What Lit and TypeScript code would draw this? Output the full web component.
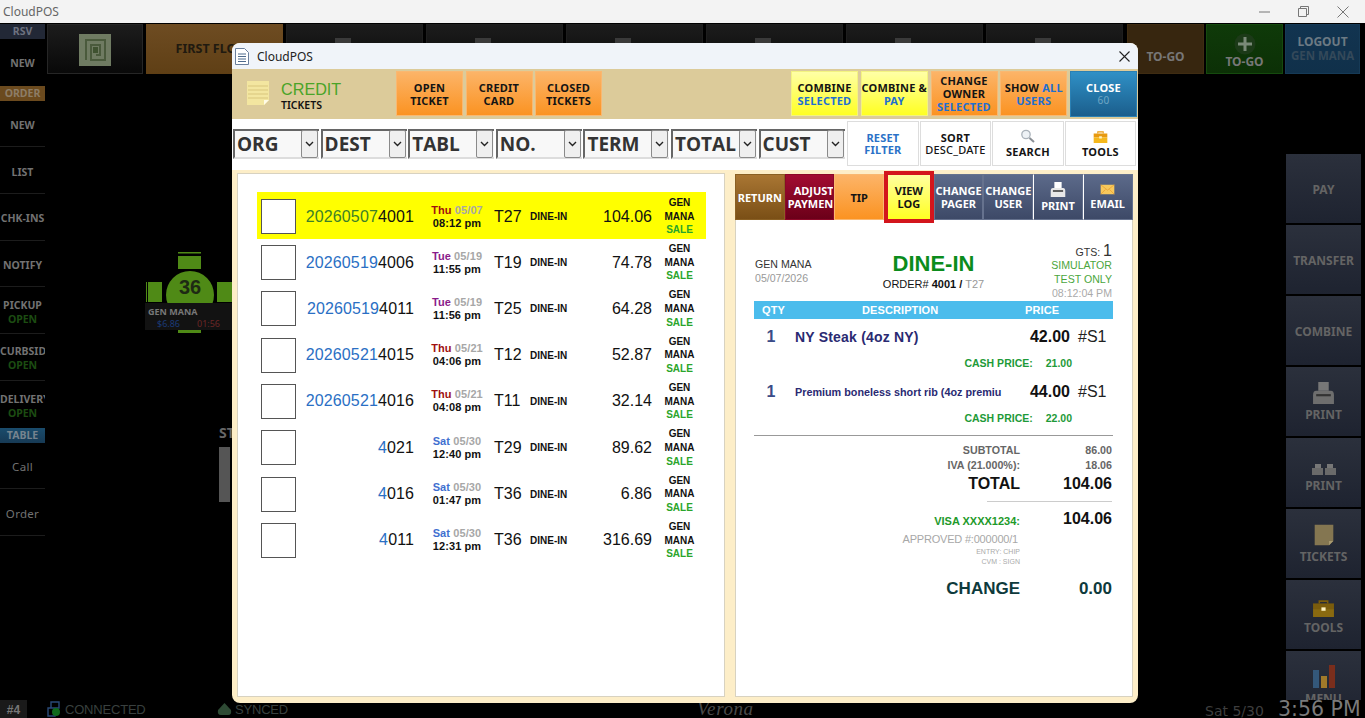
import { LitElement, html, css, svg } from 'lit';
import { customElement } from 'lit/decorators.js';
import { classMap } from 'lit/directives/class-map.js';

const printerIcon = (w: number, h: number, a = '#e8e8e8', b = '#fff') => html`<svg class="ico" width=${w} height=${h} viewBox="0 0 22 20" preserveAspectRatio="none">
  <path d="M6 0h10v8H6z" fill=${b} />
  <path d="M1 12q0-4 3-4h14q3 0 3 4v8H1z" fill=${a} />
  <path d="M4 11h14v2H4z" fill="#333" />
</svg>`;

const envelopeIcon = () => html`<svg class="ico" width="15" height="11" viewBox="0 0 22 16" preserveAspectRatio="none">
  <path d="M1 1h20v14H1z" fill="#f8c95c" />
  <path d="M1 1l10 8 10-8M1 15l7-7M21 15l-7-7" fill="none" stroke="#e89a2c" />
</svg>`;

const toolboxIcon = (w: number, h: number, body = '#f5b81c', top = '#e89a10') => html`<svg class="ico" width=${w} height=${h} viewBox="0 0 22 15" preserveAspectRatio="none">
  <path d="M7 3V1h8v2" fill="none" stroke=${top} stroke-width="1.5" />
  <path d="M1 3h20v5H1z" fill=${top} />
  <path d="M1 8h20v7H1z" fill=${body} />
  <path d="M9 6.5h4v3H9z" fill="#fff3c0" />
</svg>`;

const noteIcon = (w: number, h: number, c = '#f3e6a0', lines = true) => html`<svg class="ico" width=${w} height=${h} viewBox="0 0 26 26">
  <path d="M2 1h22v19l-5 5H2z" fill=${c} />
  ${lines ? [6, 10, 14, 18].map((y) => svg`<path d="M3 ${y}h20" stroke="#d9c67c" stroke-width="1" />`) : ''}
  <path d="M24 20h-5v5z" fill=${lines ? '#fffbe6' : '#a89a70'} />
</svg>`;

interface Ticket {
  pre: string;
  no: string;
  day: string;
  dayClass: string;
  date: string;
  time: string;
  table: string;
  total: string;
}

const tickets: Ticket[] = [
  { pre: '20260507', no: '4001', day: 'Thu', dayClass: 'thu', date: '05/07', time: '08:12 pm', table: 'T27', total: '104.06' },
  { pre: '20260519', no: '4006', day: 'Tue', dayClass: 'tue', date: '05/19', time: '11:55 pm', table: 'T19', total: '74.78' },
  { pre: '20260519', no: '4011', day: 'Tue', dayClass: 'tue', date: '05/19', time: '11:56 pm', table: 'T25', total: '64.28' },
  { pre: '20260521', no: '4015', day: 'Thu', dayClass: 'thu', date: '05/21', time: '04:06 pm', table: 'T12', total: '52.87' },
  { pre: '20260521', no: '4016', day: 'Thu', dayClass: 'thu', date: '05/21', time: '04:08 pm', table: 'T11', total: '32.14' },
  { pre: '4', no: '021', day: 'Sat', dayClass: 'sat', date: '05/30', time: '12:40 pm', table: 'T29', total: '89.62' },
  { pre: '4', no: '016', day: 'Sat', dayClass: 'sat', date: '05/30', time: '01:47 pm', table: 'T36', total: '6.86' },
  { pre: '4', no: '011', day: 'Sat', dayClass: 'sat', date: '05/30', time: '12:31 pm', table: 'T36', total: '316.69' },
];

const filters = ['ORG', 'DEST', 'TABL', 'NO.', 'TERM', 'TOTAL', 'CUST'];

@customElement('app-root')
export class AppRoot extends LitElement {
  static styles = css`
    :host {
      display: block;
      position: relative;
      width: 1365px;
      height: 718px;
      overflow: hidden;
      background: #000;
      font-family: 'Noto Sans', 'Liberation Sans', sans-serif;
    }
    .ico {
      display: block;
    }

    /* window chrome */
    .titlebar {
      height: 23px;
      background: #f3f3f3;
      display: flex;
      align-items: center;
      justify-content: space-between;
      padding-left: 3px;
      font-size: 12px;
      color: #666;
    }
    .winctl {
      display: flex;
      align-items: center;
      gap: 28px;
      padding-right: 16px;
    }

    /* background app */
    .main {
      height: 677px;
      display: flex;
      overflow: hidden;
    }
    .side {
      width: 45px;
      flex: none;
      padding-top: 1px;
      font-weight: 700;
      font-size: 10.5px;
      color: #727272;
    }
    .tag {
      height: 15px;
      line-height: 15px;
      text-align: center;
    }
    .tag.rsv {
      background: #222836;
      color: #6d7280;
    }
    .tag.order {
      background: #6b4a1e;
      color: #8d7d66;
    }
    .tag.table {
      background: linear-gradient(#1a4c6c, #173a55);
      color: #76848f;
    }
    .side-item {
      height: 46.7px;
      box-sizing: border-box;
      padding-top: 3px;
      display: flex;
      flex-direction: column;
      justify-content: center;
      text-align: center;
      white-space: nowrap;
      line-height: 14px;
      overflow: hidden;
      border-bottom: 1px solid #1c1c1c;
    }
    .side-item.plain {
      border-bottom: 0;
      padding-top: 1px;
    }
    .side-item.plain.last {
      padding-top: 3px;
    }
    .side-item span {
      display: block;
    }
    .side-item.long span {
      text-align: left;
    }
    .side-item .open,
    .side-item.long .open {
      color: #1c4c12;
      text-align: center;
    }
    .side-item.thin {
      font-weight: 400;
      font-size: 11.5px;
      letter-spacing: 0.3px;
    }
    .center {
      flex: 1;
      display: flex;
      flex-direction: column;
      min-width: 0;
    }
    .top {
      height: 50px;
      display: flex;
      padding: 1px 0 0 2px;
      box-sizing: border-box;
      flex: none;
    }
    .cell {
      box-sizing: border-box;
      width: 137px;
      height: 50px;
      margin-right: 3px;
      background: linear-gradient(#1c1c1c, #090909);
      border: 1px solid #1e1e1e;
      display: flex;
      justify-content: center;
      padding-top: 13px;
      font-size: 12px;
      font-weight: 700;
      color: #777;
    }
    .cell.logo {
      width: 96px;
      margin-right: 3px;
      padding-top: 9px;
      border-color: #262626;
    }
    .cell.floor {
      background: linear-gradient(#6e4c22, #5f3f15);
      border: 0;
      color: #201a10;
      padding-top: 16px;
      padding-left: 1px;
      font-size: 12.5px;
    }
    .cell .bump {
      margin-left: -24px;
    }
    .cell.small {
      width: 77px;
      margin-right: 2px;
      padding-top: 0;
      flex-direction: column;
      align-items: center;
      justify-content: flex-end;
      padding-bottom: 5px;
      line-height: 13px;
    }
    .cell.togo {
      background: #37260f;
      border-color: #3f2c12;
      padding-bottom: 10px;
      margin-left: 1px;
    }
    .cell.add {
      background: linear-gradient(#0f3a09, #0c3006);
      border-color: #154a0e;
    }
    .cell.logout {
      background: linear-gradient(#123450, #10304a);
      border-color: #163a56;
      justify-content: center;
      padding-bottom: 0;
      width: 75px;
      line-height: 14px;
      color: #6c7a84;
    }
    .cell.logout small {
      color: #34495a;
      font-size: 11.5px;
    }
    .lower {
      flex: 1;
      display: flex;
      min-height: 0;
    }
    .floor-area {
      flex: 1;
      position: relative;
    }
    .tbl {
      position: absolute;
      left: 100px;
      top: 179px;
      width: 87px;
      height: 82px;
      overflow: hidden;
    }
    .tbl .label {
      position: absolute;
      left: 0;
      top: 51px;
      width: 87px;
      height: 27px;
      background: #121212;
      box-sizing: border-box;
      padding: 3px 0 0 3px;
      font-size: 9px;
      font-weight: 700;
      line-height: 12px;
      color: #777;
    }
    .tbl .label div {
      display: flex;
      gap: 17px;
      padding-left: 9px;
      font-weight: 400;
    }
    .tbl .amt {
      color: #1b3a78;
    }
    .tbl .tm {
      color: #6a2626;
    }
    .tbl .no {
      position: absolute;
      left: 0;
      right: 0;
      top: 24px;
      text-align: center;
      text-indent: 3px;
      font: 700 20px 'Liberation Sans', sans-serif;
      color: #1e2a14;
    }
    .station {
      position: absolute;
      left: 174px;
      top: 352px;
      font-size: 14px;
      font-weight: 700;
      color: #666;
      line-height: 16px;
    }
    .block {
      width: 11px;
      height: 55px;
      margin-top: 6px;
      background: #555;
    }
    .right {
      width: 75px;
      flex: none;
      margin-right: 4px;
      padding-top: 81px;
      display: flex;
      flex-direction: column;
      gap: 2px;
    }
    .rbtn {
      flex: none;
      height: 69px;
      box-sizing: border-box;
      padding-top: 2px;
      background: linear-gradient(#2b303c, #1e2330);
      display: flex;
      flex-direction: column;
      align-items: center;
      justify-content: center;
      gap: 2px;
      font-size: 12px;
      font-weight: 700;
      color: #646464;
    }
    .rbtn.iconed {
      justify-content: flex-end;
      padding-bottom: 13px;
    }

    .status {
      height: 18px;
      display: flex;
      align-items: center;
      font-family: 'Liberation Sans', sans-serif;
      font-size: 13px;
      color: #39403f;
      overflow: hidden;
    }
    .status .term {
      width: 27px;
      height: 18px;
      line-height: 20px;
      background: #1a1a1a;
      color: #777;
      font-weight: 700;
      font-size: 12px;
      text-align: center;
      flex: none;
    }
    .status .group {
      display: flex;
      align-items: center;
      gap: 3px;
      flex: none;
      letter-spacing: -0.2px;
    }
    .status .verona {
      width: 508px;
      flex: none;
      font: italic 19px 'Liberation Serif', serif;
      color: #4a4a4a;
      letter-spacing: 0.6px;
    }
    .status .date {
      width: 73px;
      flex: none;
      font: 14px 'DejaVu Sans', sans-serif;
      color: #3e3e3e;
      padding-top: 3px;
    }
    .status .clock {
      flex: none;
      font: 20.5px/18px 'DejaVu Sans', sans-serif;
      color: #7a7a7a;
      white-space: nowrap;
    }

    /* modal */
    .modal {
      position: absolute;
      left: 232px;
      top: 43px;
      width: 906px;
      height: 660px;
      border-radius: 8px;
      overflow: hidden;
      display: flex;
      flex-direction: column;
      background: #fdeec8;
    }
    .mtitle {
      height: 26px;
      flex: none;
      background: #f0f4f9;
      display: flex;
      align-items: center;
      padding: 0 8px 0 3px;
      gap: 8px;
      font-size: 12px;
      color: #222;
    }
    .mtitle .x {
      margin-left: auto;
    }
    .mhead {
      height: 50px;
      flex: none;
      box-sizing: border-box;
      background: #dccb9a;
      display: flex;
      align-items: flex-start;
      padding: 2px 1px 0 0;
    }
    .brand {
      width: 164px;
      flex: none;
      display: flex;
      gap: 10px;
      padding: 9px 0 0 13px;
      box-sizing: border-box;
    }
    .brand b {
      display: block;
      font: 400 16.2px/18px 'Liberation Sans', sans-serif;
      color: #4aa428;
    }
    .brand span {
      display: block;
      font-size: 10.5px;
      line-height: 14px;
      font-weight: 600;
      color: #111;
    }
    .bgroup {
      display: flex;
      gap: 2.5px;
    }
    .bgroup.end {
      margin-left: auto;
      gap: 2.75px;
    }
    .btn {
      box-sizing: border-box;
      width: 67px;
      height: 45px;
      border: 1px solid #f9b871;
      background: linear-gradient(#fcb468, #fb9322);
      color: #141414;
      font-size: 11px;
      font-weight: 700;
      line-height: 13px;
      letter-spacing: 0.2px;
      display: flex;
      flex-direction: column;
      align-items: center;
      justify-content: center;
      text-align: center;
      white-space: nowrap;
      overflow: hidden;
    }
    .btn.yellow {
      background: linear-gradient(#ffffa6, #ffff22);
      border-color: #f3f380;
    }
    .btn.blue {
      background: linear-gradient(#2f90c6, #1b5e8c);
      border-color: #2a80b4;
      color: #fff;
      height: 46px;
    }
    .btn.blue small {
      color: #6fa6c4;
      font-size: 10px;
      font-weight: 400;
    }
    .btn em {
      font-style: normal;
      color: #1f6fd0;
    }
    .mfilter {
      height: 51px;
      flex: none;
      background: #fff;
      display: flex;
      padding-left: 1px;
    }
    .sel {
      box-sizing: border-box;
      width: 86.1px;
      height: 30px;
      margin: 10px 1.5px 0 0;
      flex: none;
      background: #f8f8f8;
      border-top: 2px solid #666;
      border-left: 2px solid #666;
      border-bottom: 2px solid #ddd;
      display: flex;
      align-items: center;
      justify-content: space-between;
      padding-left: 2px;
      font: 700 19px 'Open Sans', sans-serif;
      color: #333;
    }
    .sel i {
      box-sizing: border-box;
      width: 17px;
      height: 28px;
      margin-top: -1px;
      margin-right: 1px;
      border: 1px solid #8a8a8a;
      border-radius: 2px;
      background: #efefef;
      display: flex;
      align-items: center;
      justify-content: center;
    }
    .tools {
      display: flex;
      margin: 2px 0 0 1px;
      gap: 1px;
    }
    .tool {
      box-sizing: border-box;
      width: 71.5px;
      height: 45px;
      background: #fff;
      border: 1px solid #ddd;
      font-size: 11px;
      font-weight: 700;
      line-height: 12px;
      letter-spacing: 0.2px;
      color: #141414;
      display: flex;
      flex-direction: column;
      align-items: center;
      justify-content: flex-end;
      padding-bottom: 7px;
      text-align: center;
      white-space: nowrap;
      gap: 3px;
    }
    .tool.text {
      justify-content: center;
      padding-bottom: 0;
      gap: 0;
    }
    .tool.reset {
      color: #2a72c8;
    }
    .tool .thin {
      font-weight: 500;
    }
    .content {
      flex: 1;
      display: flex;
      gap: 10px;
      padding: 3px 5px 6px;
      min-height: 0;
    }
    .list {
      width: 488px;
      flex: none;
      box-sizing: border-box;
      background: #fff;
      border: 1px solid #d8d2c0;
      padding: 18px 0 0 19px;
    }
    .row {
      width: 449px;
      height: 46.33px;
      display: grid;
      grid-template-columns: 35px 118px 80px 36px 60px 62px 54px;
      align-items: center;
      padding: 2px 0 0 4px;
      box-sizing: border-box;
      color: #111;
    }
    .row.hl {
      background: #ffff00;
      height: 47px;
      margin-bottom: -0.67px;
    }
    .check {
      width: 35px;
      height: 35px;
      box-sizing: border-box;
      background: #fff;
      border: 1px solid #555;
    }
    .num {
      font: 16px 'Liberation Sans', sans-serif;
      text-align: right;
      letter-spacing: 0.12px;
    }
    .num span {
      color: #2a6fc4;
    }
    .hl .num span {
      color: #3d7f28;
    }
    .when {
      font: 700 11px/13px 'Liberation Sans', sans-serif;
      text-align: center;
      padding-left: 6px;
      letter-spacing: 0.1px;
    }
    .when span {
      color: #a7a7a7;
    }
    .when .thu {
      color: #a01010;
    }
    .when .tue {
      color: #8a1a8a;
    }
    .when .sat {
      color: #3f6fd0;
    }
    .tb {
      font: 16px 'Liberation Sans', sans-serif;
    }
    .svc {
      font: 700 10px 'Liberation Sans', sans-serif;
    }
    .tot {
      font: 16px 'Liberation Sans', sans-serif;
      text-align: right;
    }
    .who {
      font: 700 10px/13.6px 'Liberation Sans', sans-serif;
      text-align: center;
      padding-left: 1px;
    }
    .who span {
      display: block;
      color: #2aa52a;
    }
    .detail {
      width: 398px;
      flex: none;
      display: flex;
      flex-direction: column;
    }
    .dbar {
      height: 46px;
      margin-top: 1px;
      flex: none;
      display: flex;
      position: relative;
      z-index: 1;
    }
    .dbar .btn {
      width: 49.7px;
      height: auto;
      letter-spacing: 0;
    }
    .btn.slate {
      background: linear-gradient(#5c6a8a, #3d4967);
      border-color: #66728e;
      color: #fff;
      justify-content: center;
    }
    .btn.slate.gap {
      border-left: 1px solid #fff;
      gap: 2px;
    }
    .btn.ret {
      background: linear-gradient(#a97633, #7a4f16);
      border-color: #8a6024;
      color: #fff;
    }
    .btn.adj {
      background: linear-gradient(#a20c32, #6b0019);
      border-color: #8c0828;
      color: #fff;
      align-items: flex-start;
      padding-left: 2px;
    }
    .btn.log {
      margin: -3px 0;
      border: 4px solid #d3151c;
      background: linear-gradient(#ffffa0, #ffff22);
    }
    .receipt {
      flex: 1;
      background: #fff;
      border: 1px solid #d8d2c0;
      border-top: 0;
      padding: 21px 19px 0 18px;
      font-family: 'Liberation Sans', sans-serif;
    }
    .rhead {
      height: 60px;
      display: grid;
      grid-template-columns: 110px 1fr 110px;
      font-size: 11px;
      line-height: 14px;
    }
    .rleft {
      padding: 16px 0 0 1px;
      color: #333;
      font-size: 10.6px;
    }
    .rleft span {
      display: block;
      color: #999;
    }
    .rmid {
      text-align: center;
      padding-top: 10px;
      color: #111;
      font-size: 11px;
    }
    .rmid h2 {
      margin: 0;
      font-size: 22px;
      line-height: 26px;
      color: #0b8c1c;
    }
    .rmid b {
      font-weight: 700;
    }
    .rmid span {
      color: #999;
    }
    .rright {
      text-align: right;
      padding: 3px 0 0;
      color: #4aa63c;
      font-size: 10.6px;
    }
    .rright div {
      height: 14px;
      white-space: nowrap;
      padding-right: 1px;
    }
    .rright .gts {
      color: #333;
    }
    .rright .gts b {
      font-size: 16px;
      font-weight: 400;
    }
    .rright .t {
      color: #aaa;
    }
    .rcols {
      height: 18px;
      background: #4bbcec;
      color: #fff;
      font-size: 11px;
      font-weight: 700;
      line-height: 18px;
      display: grid;
      grid-template-columns: 100px 163px 1fr;
      padding-left: 8px;
      letter-spacing: 0.1px;
    }
    .item {
      display: grid;
      grid-template-columns: 34px 1fr auto 36px;
      column-gap: 7px;
      height: 36px;
      align-items: center;
      color: #2a2a72;
      white-space: nowrap;
    }
    .item .q {
      text-align: center;
      font-size: 16px;
      font-weight: 700;
      color: #3a4c88;
    }
    .item .d {
      font-size: 14px;
      font-weight: 700;
      letter-spacing: 0.2px;
    }
    .item .d.sm {
      font-size: 10.8px;
      letter-spacing: 0;
    }
    .item .p {
      font-size: 16px;
      font-weight: 700;
      color: #111;
    }
    .item .c {
      font-size: 16px;
      color: #222;
      margin-left: 1px;
    }
    .cash {
      height: 16px;
      display: flex;
      justify-content: flex-end;
      gap: 13px;
      padding-right: 41px;
      font-size: 10.5px;
      font-weight: 700;
      line-height: 17px;
      color: #1e9a38;
    }
    .cash + .item {
      margin-top: 3px;
    }
    .rule {
      height: 1px;
      background: #999;
      margin-top: 9px;
    }
    .sum {
      display: grid;
      grid-template-columns: 266px 92px;
      text-align: right;
      align-items: center;
      white-space: nowrap;
    }
    .sum.s1 {
      height: 15px;
      font-size: 10.7px;
      font-weight: 700;
      color: #666;
    }
    .sum.first {
      margin-top: 6px;
    }
    .sum.big {
      height: 20px;
      margin-top: 2px;
      font-size: 16px;
      font-weight: 700;
      color: #111;
    }
    .rule.short {
      margin: 7px 0 0 233px;
      width: 125px;
      background: #ccc;
    }
    .sum.visa {
      height: 20px;
      margin-top: 7px;
      font-size: 16px;
      font-weight: 700;
      color: #111;
    }
    .sum.visa span {
      font-size: 11px;
      color: #1e9a2a;
      padding-top: 3px;
    }
    .sum.appr {
      height: 15px;
      margin-top: 2px;
      font-size: 11px;
      letter-spacing: -0.2px;
      color: #a8a8a8;
    }
    .sum.appr span {
      padding-right: 2px;
    }
    .sum.tiny {
      height: 10px;
      font-size: 7px;
      color: #aaa;
    }
    .sum.change {
      height: 20px;
      margin-top: 13px;
      font-size: 17px;
      font-weight: 700;
      color: #0e3a3c;
    }
  `;

  private renderSide() {
    const plain = (t: string, long = false) =>
      html`<div class=${classMap({ 'side-item': true, long })}><span>${t}</span></div>`;
    const open = (t: string, long = false, last = false) =>
      html`<div class=${classMap({ 'side-item': true, long, plain: last, last })}>
        <span>${t}</span><span class="open">OPEN</span>
      </div>`;
    return html`<div class="side">
      <div class="tag rsv">RSV</div>
      <div class="side-item plain"><span>NEW</span></div>
      <div class="tag order">ORDER</div>
      ${plain('NEW')} ${plain('LIST')} ${plain('CHK-INS')} ${plain('NOTIFY')}
      ${open('PICKUP')} ${open('CURBSIDE', true)} ${open('DELIVERY', true, true)}
      <div class="tag table">TABLE</div>
      <div class="side-item thin"><span>Call</span></div>
      <div class="side-item thin"><span>Order</span></div>
    </div>`;
  }

  private renderTop() {
    return html`<div class="top">
      <div class="cell logo">
        <svg width="32" height="32" viewBox="0 0 32 32">
          <path d="M0 0h32v32H0z" fill="#6f7b62" />
          <path d="M7 26V6h19v20H12V11h9v10h-4" fill="none" stroke="#4a5a3c" stroke-width="2" />
          <path d="M14 13h5v6h-5z" fill="#3f5230" />
        </svg>
      </div>
      <div class="cell floor">FIRST FLOOR</div>
      ${[0, 1, 2, 3, 4, 5].map(
        () => html`<div class="cell">
          <svg class="bump" width="24" height="24" viewBox="0 0 24 24"><path d="M4 0h16v24H4z" fill="#3a3a3a" /></svg>
        </div>`,
      )}
      <div class="cell small togo">TO-GO</div>
      <div class="cell small add">
        <svg width="22" height="22" viewBox="0 0 22 22">
          <circle cx="11" cy="11" r="10.5" fill="#1c3a18" />
          <path d="M9.5 4h3v5.5H18v3h-5.5V18h-3v-5.5H4v-3h5.5z" fill="#7a8a78" />
        </svg>
        TO-GO
      </div>
      <div class="cell small logout">LOGOUT<small>GEN MANA</small></div>
    </div>`;
  }

  private renderFloor() {
    return html`<div class="floor-area">
      <div class="tbl">
        <svg width="87" height="82" viewBox="0 0 87 82">
          <path d="M33 0h23v1.5H33zM33 4h23v13H33zM1 30h1v20H1zM3 30h14v20H3zM72 30h15v20H72zM33 78h23v3H33z" fill="#4f8a16" />
          <circle cx="45" cy="43" r="24" fill="#4f8a16" />
        </svg>
        <div class="no">36</div>
        <div class="label">GEN MANA<div><span class="amt">$6.86</span><span class="tm">01:56</span></div></div>
      </div>
      <div class="station">ST<div class="block"></div></div>
    </div>`;
  }

  private renderRight() {
    return html`<div class="right">
      <div class="rbtn">PAY</div>
      <div class="rbtn">TRANSFER</div>
      <div class="rbtn">COMBINE</div>
      <div class="rbtn iconed">${printerIcon(23, 22, '#6e6e6e', '#777')}PRINT</div>
      <div class="rbtn iconed">
        <svg class="ico" width="24" height="11" viewBox="0 0 24 11">
          <path d="M3 0h6v4H3zM15 0h6v4h-6z" fill="#777" />
          <path d="M0 4h11v7H0zM13 4h11v7H13z" fill="#6a6a6a" />
        </svg>
        PRINT
      </div>
      <div class="rbtn iconed">${noteIcon(22, 22, '#847651', false)}TICKETS</div>
      <div class="rbtn iconed">${toolboxIcon(23, 17, '#8a6a10', '#7a5c0c')}TOOLS</div>
      <div class="rbtn iconed">
        <svg class="ico" width="24" height="24" viewBox="0 0 24 24">
          <path d="M1 6h6v18H1z" fill="#34587a" />
          <path d="M9 12h6v12H9z" fill="#a07a2a" />
          <path d="M17 1h6v23h-6z" fill="#7a2e1c" />
        </svg>
        MENU
      </div>
    </div>`;
  }

  private renderModal() {
    return html`<div class="modal">
      <div class="mtitle">
        <svg class="ico" width="14" height="17" viewBox="0 0 14 17">
          <path d="M.5.5h9l4 4v12H.5z" fill="#fff" stroke="#6a7f9c" />
          <path d="M3 6h8M3 8.5h8M3 11h8M3 13.5h8" stroke="#4d6a8c" />
        </svg>
        CloudPOS
        <svg class="x" width="11" height="11" viewBox="0 0 11 11">
          <path d="M.5.5l10 10M10.5.5l-10 10" stroke="#222" stroke-width="1.1" />
        </svg>
      </div>
      <div class="mhead">
        <div class="brand">
          ${noteIcon(26, 26)}
          <div><b>CREDIT</b><span>TICKETS</span></div>
        </div>
        <div class="bgroup">
          <div class="btn">OPEN<br />TICKET</div>
          <div class="btn">CREDIT<br />CARD</div>
          <div class="btn">CLOSED<br />TICKETS</div>
        </div>
        <div class="bgroup end">
          <div class="btn yellow">COMBINE<em>SELECTED</em></div>
          <div class="btn yellow">COMBINE &amp;<em>PAY</em></div>
          <div class="btn">CHANGE<br />OWNER<em>SELECTED</em></div>
          <div class="btn"><span>SHOW <em>ALL</em></span><em>USERS</em></div>
          <div class="btn blue">CLOSE<small>60</small></div>
        </div>
      </div>
      <div class="mfilter">
        ${filters.map(
          (f) => html`<div class="sel">
            ${f}
            <i><svg width="9" height="6" viewBox="0 0 9 6"><path d="M1 1l3.5 3.5L8 1" fill="none" stroke="#222" stroke-width="1.4" /></svg></i>
          </div>`,
        )}
        <div class="tools">
          <div class="tool text reset">RESET<br />FILTER</div>
          <div class="tool text">SORT<span class="thin">DESC_DATE</span></div>
          <div class="tool">
            <svg class="ico" width="16" height="14" viewBox="0 0 16 14">
              <circle cx="6" cy="5.5" r="4.2" fill="#eef2f6" stroke="#aab2ba" stroke-width="1.3" />
              <path d="M9.5 9l4.5 4" stroke="#8a8f95" stroke-width="2" />
            </svg>
            SEARCH
          </div>
          <div class="tool">${toolboxIcon(15, 12)}TOOLS</div>
        </div>
      </div>
      <div class="content">
        <div class="list">
          ${tickets.map(
            (t, i) => html`<div class=${classMap({ row: true, hl: i === 0 })}>
              <div class="check"></div>
              <div class="num"><span>${t.pre}</span>${t.no}</div>
              <div class="when"><b class=${t.dayClass}>${t.day}</b> <span>${t.date}</span><br />${t.time}</div>
              <div class="tb">${t.table}</div>
              <div class="svc">DINE-IN</div>
              <div class="tot">${t.total}</div>
              <div class="who">GEN<br />MANA<span>SALE</span></div>
            </div>`,
          )}
        </div>
        <div class="detail">
          <div class="dbar">
            <div class="btn ret">RETURN</div>
            <div class="btn adj">ADJUST<br />PAYMENT</div>
            <div class="btn">TIP</div>
            <div class="btn log">VIEW<br />LOG</div>
            <div class="btn slate">CHANGE<br />PAGER</div>
            <div class="btn slate">CHANGE<br />USER</div>
            <div class="btn slate gap">${printerIcon(16, 15)}PRINT</div>
            <div class="btn slate gap">${envelopeIcon()}EMAIL</div>
          </div>
          <div class="receipt">
            <div class="rhead">
              <div class="rleft">GEN MANA<span>05/07/2026</span></div>
              <div class="rmid">
                <h2>DINE-IN</h2>
                ORDER# <b>4001 /</b> <span>T27</span>
              </div>
              <div class="rright">
                <div class="gts">GTS: <b>1</b></div>
                <div>SIMULATOR</div>
                <div>TEST ONLY</div>
                <div class="t">08:12:04 PM</div>
              </div>
            </div>
            <div class="rcols"><span>QTY</span><span>DESCRIPTION</span><span>PRICE</span></div>
            <div class="item">
              <span class="q">1</span><span class="d">NY Steak (4oz NY)</span><span class="p">42.00</span><span class="c">#S1</span>
            </div>
            <div class="cash"><span>CASH PRICE:</span><span>21.00</span></div>
            <div class="item">
              <span class="q">1</span><span class="d sm">Premium boneless short rib (4oz premiu</span><span class="p">44.00</span><span class="c">#S1</span>
            </div>
            <div class="cash"><span>CASH PRICE:</span><span>22.00</span></div>
            <div class="rule"></div>
            <div class="sum s1 first"><span>SUBTOTAL</span><span>86.00</span></div>
            <div class="sum s1"><span>IVA (21.000%):</span><span>18.06</span></div>
            <div class="sum big"><span>TOTAL</span><span>104.06</span></div>
            <div class="rule short"></div>
            <div class="sum visa"><span>VISA XXXX1234:</span>104.06</div>
            <div class="sum appr"><span>APPROVED #:000000/1</span></div>
            <div class="sum tiny"><span>ENTRY: CHIP</span></div>
            <div class="sum tiny"><span>CVM : SIGN</span></div>
            <div class="sum change"><span>CHANGE</span><span>0.00</span></div>
          </div>
        </div>
      </div>
    </div>`;
  }

  render() {
    return html`
      <div class="titlebar">
        CloudPOS
        <div class="winctl">
          <svg width="11" height="2" viewBox="0 0 11 2"><path d="M0 1h11" stroke="#777" /></svg>
          <svg width="11" height="11" viewBox="0 0 11 11">
            <path d="M.5 2.5h8v8h-8z" fill="none" stroke="#777" /><path d="M2.5 2.5v-2h8v8h-2" fill="none" stroke="#777" />
          </svg>
          <svg width="12" height="12" viewBox="0 0 12 12"><path d="M.5.5l11 11M11.5.5l-11 11" stroke="#777" /></svg>
        </div>
      </div>
      <div class="main">
        ${this.renderSide()}
        <div class="center">
          ${this.renderTop()}
          <div class="lower">${this.renderFloor()} ${this.renderRight()}</div>
        </div>
      </div>
      <div class="status">
        <div class="term">#4</div>
        <div class="group" style="margin-left:20px;width:170px">
          <svg width="15" height="16" viewBox="0 0 15 16">
            <path d="M4 1h8v6H4zM1 7h7v8H1z" fill="none" stroke="#2a4a78" stroke-width="1.4" />
            <circle cx="9" cy="11" r="4" fill="#0f6a1c" />
          </svg>
          CONNECTED
        </div>
        <div class="group" style="width:480px">
          <svg width="15" height="14" viewBox="0 0 15 14"><path d="M7.5 1L14 8q1 5-3 5H4Q0 13 1 8z" fill="#2e4a34" /></svg>
          SYNCED
        </div>
        <div class="verona">Verona</div>
        <div class="date">Sat 5/30</div>
        <div class="clock">3:56 PM</div>
      </div>
      ${this.renderModal()}
    `;
  }
}
